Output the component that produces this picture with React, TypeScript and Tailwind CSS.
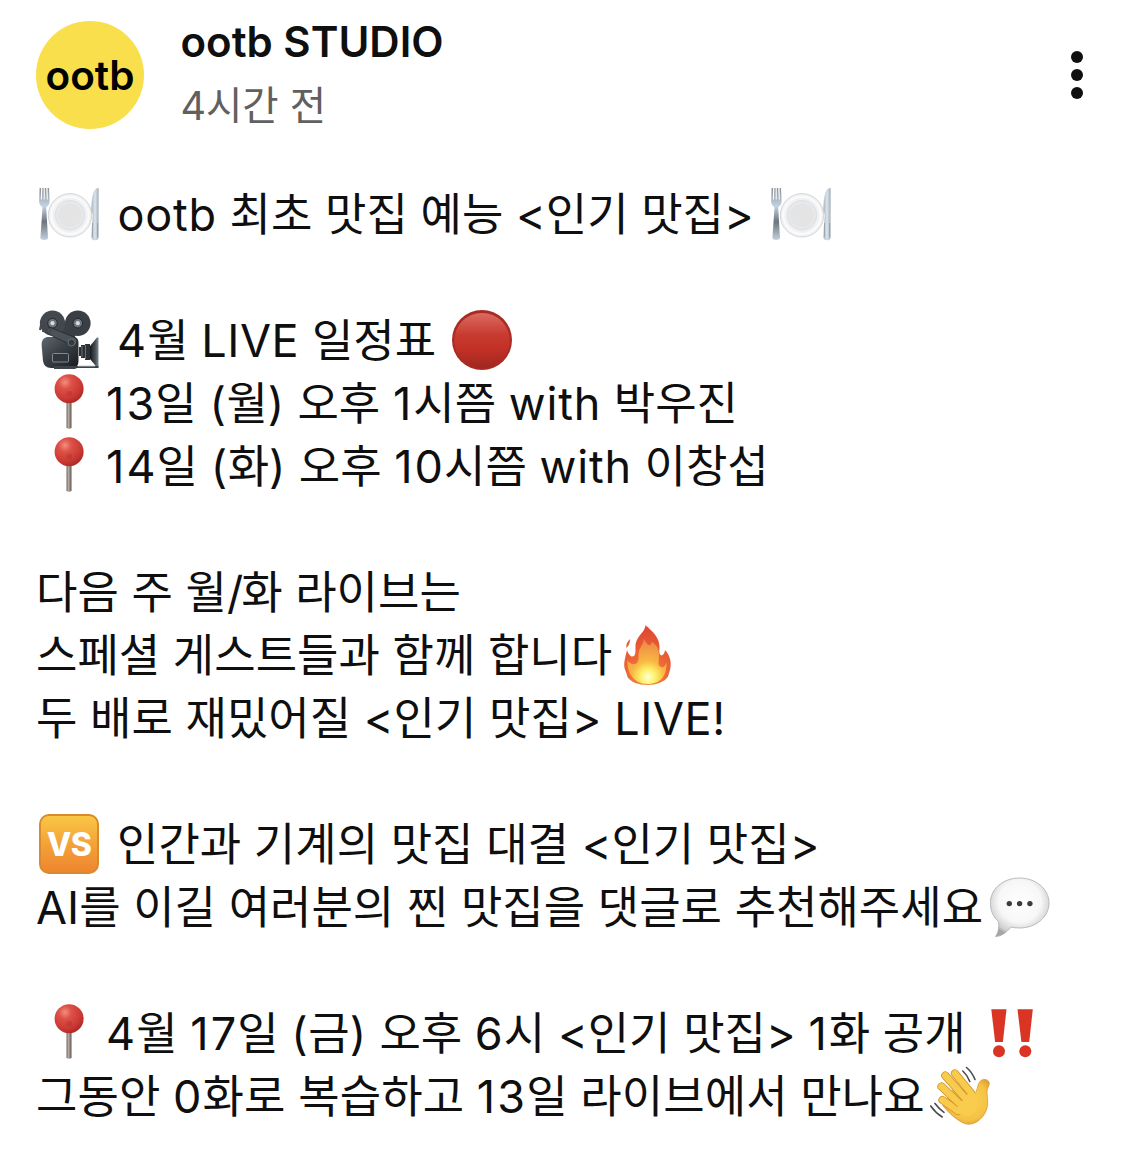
import type { ReactNode } from 'react'

function Plate() {
  return (
    <svg viewBox="0 0 60 60" className="mt-px size-[60px] shrink-0">
      <defs>
        <linearGradient id="steel" x1="0" x2="0" y1="0" y2="1">
          <stop offset="0" stopColor="#8b8f94" />
          <stop offset=".35" stopColor="#c3d3e4" />
          <stop offset=".65" stopColor="#6d747c" />
          <stop offset="1" stopColor="#c3d0de" />
        </linearGradient>
        <linearGradient id="blade" x1="0" x2="1" y1="0" y2="0">
          <stop offset="0" stopColor="#a9b5c1" />
          <stop offset=".5" stopColor="#dce6ee" />
          <stop offset="1" stopColor="#a4afba" />
        </linearGradient>
      </defs>
      <circle cx="31" cy="31.3" r="21.7" fill="#f1f1f2" stroke="#d0d1d3" strokeWidth=".9" />
      <circle cx="31" cy="31.3" r="18.6" fill="none" stroke="#fbfbfb" strokeWidth="2" />
      <circle cx="31" cy="31.3" r="14.5" fill="#e8e9ea" stroke="#dce3ea" strokeWidth="1.6" />
      <circle cx="31" cy="31.3" r="12" fill="#e4e4e4" />
      <path d="M.6 4 .1 17c0 4 2.300 5 3.400 6.500L1.400 54c0 2.600 7.600 2.600 7.600 0L7.200 23.500c1.100-1.500 3.500-2.500 3.400-6.500L10 4H8.600l.2 11.500h-1L7.200 4H5.800l-.1 11.500h-1L4.600 4H3.400l-.5 11.500h-1L2.100 4Z" fill="url(#steel)" />
      <path d="M59.500 4.200c-4-.5-6.500 6.800-7 21.500-.1 2.500 1.500 3.300 1.500 5.300l-1.200 23c0 2.400 6.500 2.400 6.500 0Z" fill="url(#blade)" stroke="#b3bcc5" strokeWidth=".5" />
      <path d="M53.500 39l-.3 14M58.700 39v14" stroke="#8d979f" strokeWidth=".8" fill="none" />
    </svg>
  )
}

function Camera() {
  return (
    <svg viewBox="0 0 60 60" className="mt-px size-[60px] shrink-0">
      <defs>
        <linearGradient id="cam" x1="0" x2="1" y1="0" y2="1">
          <stop offset="0" stopColor="#5f686f" />
          <stop offset=".45" stopColor="#3a4146" />
          <stop offset="1" stopColor="#181b1e" />
        </linearGradient>
        <linearGradient id="hood" x1="0" x2="1" y1="0" y2="0">
          <stop offset="0" stopColor="#15181b" />
          <stop offset=".65" stopColor="#4b5359" />
          <stop offset="1" stopColor="#808a91" />
        </linearGradient>
      </defs>
      <path d="M14 13h25l-3 14H20Z" fill="#3a4045" />
      <circle cx="13.5" cy="13.2" r="12.6" fill="#42484d" />
      <circle cx="38.800" cy="13.200" r="12.800" fill="#393f44" />
      {[13.5, 38.8].map((x) => (
        <g key={x}>
          <circle cx={x} cy="13.2" r="4.8" fill="#6b747b" stroke="#23282b" strokeWidth="1" />
          <circle cx={x} cy="13.2" r="2.1" fill="#d5dce1" />
        </g>
      ))}
      <path d="M8 27h28q3 1 3.500 5v19q0 7-6 7H12Q5 58 4 51L2.600 35Q2.500 28 8 27Z" fill="url(#cam)" />
      <path d="M10 17 35 27q4 2 3 5-1 4-5 3L15 27 7 22Z" fill="#4b5258" stroke="#23272b" strokeWidth=".8" />
      <path d="m2 15-1 5M5 16l-1 6M8.500 17l-1.500 6M12 18l-2 6" stroke="#41474c" strokeWidth="2" />
      <circle cx="32.500" cy="32.500" r="3.500" fill="#343a3f" stroke="#778087" strokeWidth=".8" />
      <rect x="13.500" y="43.500" width="16" height="8.500" rx="1" fill="#30363b" stroke="#8b9298" strokeWidth=".9" />
      <path d="M40 37h2v-2h4v-1h5v16h-5v-2h-4v-2h-2Z" fill="#2b3135" />
      <path d="M43 36v11M46.500 35v14" stroke="#7a848b" strokeWidth=".8" />
      <path d="m51 36 7-8.500h1.500v30H58L51 49Z" fill="url(#hood)" />
      <path d="M15 56h44.500v2H38l-2 1H15Z" fill="#3d4449" />
      <path d="M39 56h17" stroke="#c3cace" strokeWidth=".9" />
    </svg>
  )
}

function Pin() {
  return (
    <svg viewBox="0 0 60 60" className="mt-px size-[60px] shrink-0">
      <defs>
        <radialGradient id="ball" cx=".36" cy=".28" r=".75">
          <stop offset="0" stopColor="#f28d80" />
          <stop offset=".3" stopColor="#de5147" />
          <stop offset=".75" stopColor="#ca3833" />
          <stop offset="1" stopColor="#ad2926" />
        </radialGradient>
        <linearGradient id="needle" x1="0" x2="1" y1="0" y2="0">
          <stop offset="0" stopColor="#70665f" />
          <stop offset=".4" stopColor="#b6aaa2" />
          <stop offset="1" stopColor="#5d544f" />
        </linearGradient>
      </defs>
      <path d="M27.500 27h5v28q-2.500 1.500-5 0Z" fill="url(#needle)" />
      <circle cx="30.100" cy="15.700" r="14.500" fill="url(#ball)" />
      <path d="M27.500 18h5.500v4q-2.700 2-5.500 0Z" fill="#9b2f2c" opacity=".3" />
    </svg>
  )
}

function RedCircle() {
  return (
    <svg viewBox="0 0 60 60" className="mt-px size-[60px] shrink-0">
      <defs>
        <linearGradient id="red" x1="0" x2="0" y1="0" y2="1">
          <stop offset="0" stopColor="#dc6a61" />
          <stop offset=".4" stopColor="#c73a2f" />
          <stop offset=".65" stopColor="#c33026" />
          <stop offset="1" stopColor="#9e2821" />
        </linearGradient>
      </defs>
      <circle cx="30" cy="30" r="30" fill="#a92c24" />
      <circle cx="30" cy="30.700" r="27.800" fill="url(#red)" />
    </svg>
  )
}

function Fire() {
  return (
    <svg viewBox="0 0 60 60" className="mt-px size-[60px] shrink-0">
      <defs>
        <radialGradient id="flame" gradientUnits="userSpaceOnUse" cx="30" cy="50" r="45">
          <stop offset="0" stopColor="#f9a544" />
          <stop offset=".45" stopColor="#ec6636" />
          <stop offset="1" stopColor="#df4a31" />
        </radialGradient>
        <radialGradient id="core" gradientUnits="userSpaceOnUse" cx="31" cy="52" r="36">
          <stop offset="0" stopColor="#fffde0" />
          <stop offset=".2" stopColor="#fdf36c" />
          <stop offset=".45" stopColor="#f9b842" />
          <stop offset="1" stopColor="#ee8747" />
        </radialGradient>
      </defs>
      <path d="M28.500.3C28 7 21 10 18.800 18c-1 4 .7 9-1.300 12.500-3 3-6-1-7.500-5.500C9 30 7.500 34 7.200 39c-.2 3 .8 6 2 8.500l1.300 4.500c3 5 11 8 20 8s17-3 20.500-8.500l2-6.500c2-7 0-15-5-20-.2 3-1.500 5-3.500 5.500-3-1-2-5-2-9 0-9-7-15-14-21.200Z" fill="url(#flame)" />
      <path d="M27 14c-1 7-6 9-5.500 17 .5 6-2 9-6 8-2-.5-4-2-5-4-1 12 6 24 20 24S50 50 49.500 37c-1 4-3 6-5.500 5-4-2-2-6-2-11 0-9-3-11-7-14-2 6-5 3-8-3Z" fill="url(#core)" />
      <path d="M13 14c0 4-1 6-3.500 9-.8-3 .5-6 3.500-9Z" fill="#e65b3b" />
    </svg>
  )
}

function Versus() {
  return (
    <span className="mt-px flex size-[60px] shrink-0 items-center justify-center rounded-[10px] border-2 border-[#d98a2c] bg-linear-to-b from-[#f9c745] via-[#f3a238] to-[#ee8530] text-[32px] font-extrabold tracking-[-0.5px] text-white">
      VS
    </span>
  )
}

function Bubble() {
  return (
    <svg viewBox="0 0 60 60" className="mt-px size-[60px] shrink-0">
      <defs>
        <radialGradient id="bubble" cx=".5" cy=".4" r=".6">
          <stop offset="0" stopColor="#fff" />
          <stop offset=".6" stopColor="#f7f7f7" />
          <stop offset=".9" stopColor="#d0d0d0" />
          <stop offset="1" stopColor="#a5a5a5" />
        </radialGradient>
      </defs>
      <path d="M29.500 1C46 1 59 12 59 26S46 51 29.500 51q-4.500 0-8.500-1C16 56 11 59.500 5.500 59.500 8 56 9.500 51 8.500 44.500 3 40 .3 33 .3 26 .3 12 13 1 29.500 1Z" fill="url(#bubble)" stroke="#adadad" strokeWidth=".8" />
      <circle cx="19.300" cy="26.600" r="2.700" fill="#3c3c3c" />
      <circle cx="29.600" cy="26.600" r="2.700" fill="#3c3c3c" />
      <circle cx="39.900" cy="26.600" r="2.700" fill="#3c3c3c" />
    </svg>
  )
}

function DoubleBang() {
  return (
    <svg viewBox="0 0 60 60" className="mt-px size-[60px] shrink-0" fill="#da3524">
      <path d="M9.300 6.300h15.200L20.900 39h-7.800ZM35.500 6.300h15.300L47.200 39h-7.800Z" />
      <circle cx="17" cy="48.300" r="6" />
      <circle cx="43.300" cy="48.300" r="6" />
    </svg>
  )
}

function Wave() {
  return (
    <svg viewBox="0 0 60 60" className="mt-px size-[60px] shrink-0" fill="none" strokeLinecap="round">
      <defs>
        <radialGradient id="palm" gradientUnits="userSpaceOnUse" cx="38" cy="34" r="28">
          <stop offset="0" stopColor="#fbd255" />
          <stop offset=".7" stopColor="#f5c344" />
          <stop offset="1" stopColor="#dc9a30" />
        </radialGradient>
      </defs>
      <path d="M24 22 45 26.500c3-2 2-9 6-12 3-2.500 8.500-.5 8.300 3-.2 3-2.500 5-2.300 9.500 1 9 1.500 14-2.500 21-5 8-13 12-20 9.500C26 54 19 47 13 40Z" fill="url(#palm)" stroke="#d2932b" strokeWidth=".7" />
      {['M12.500 34 28 45', 'M11.500 20.500 31 39', 'M15.300 9.500 36 33', 'M25 7.500 41 27'].map((d) => (
        <g key={d}>
          <path d={d} stroke="#cf9029" strokeWidth="8.200" />
          <path d={d} stroke="#f8cb4c" strokeWidth="6.600" />
        </g>
      ))}
      <path d="M26 43 40 25q10 1 7 16-5 12-16 8Z" fill="#f9cc4e" />
      <path d="M36.500 1.500q5.500 4.500 8.500 12M32.800 5q4.500 4 7 10.500M5 37.500q4 5.500 9 8.800M.7 40q5 7 11.500 11" stroke="#4b4b4d" strokeWidth="1.600" />
    </svg>
  )
}

function Line({ children, className = '' }: { children?: ReactNode; className?: string }) {
  return <div className={`flex h-[63px] items-start whitespace-pre leading-[63px] ${className}`}>{children}</div>
}

function tracking(part: string) {
  if (part === '1') return 'tracking-[2.1px]'
  if (part === '/') return 'tracking-[-2px]'
  if (/^[0-9]/.test(part)) return 'tracking-[1.1px]'
  if (/^[a-z]/.test(part)) return 'tracking-[0.8px]'
  if (/^([()]|LIVE)/.test(part)) return 'tracking-[0.6px]'
  return ''
}

// Latin letters and digits sit a little looser than the Hangul around them
function Text({ children, className = '' }: { children: string; className?: string }) {
  return (
    <span className={className}>
      {children.split(/(1|[02-9]+|[a-z]+|LIVE|[()/])/).map((part, i) => (
        <span key={i} className={tracking(part)}>{part}</span>
      ))}
    </span>
  )
}

export default function App() {
  return (
    <div className="h-[1164px] w-[1125px] overflow-hidden bg-white text-[#0f0f0f]" style={{ fontFamily: 'Inter, "Noto Sans CJK KR", sans-serif' }}>
      <header className="flex h-[183px] items-start pl-9 pr-[42px]">
        <div className="mt-[21px] flex size-[108px] shrink-0 items-center justify-center rounded-full bg-[#f8df4b] pt-[3px] text-[40.5px] font-semibold text-black">
          ootb
        </div>
        <div className="ml-[36.5px] mt-4 flex-1">
          <h1 className="h-[52px] text-[42px] font-semibold leading-[52px]">ootb STUDIO</h1>
          <p className="mt-3 h-[52px] text-[39.5px] leading-[52px] text-[#606060]">4시간 전</p>
        </div>
        <button aria-label="더보기" className="mt-[51px] flex flex-col gap-[6px]">
          <span className="size-3 rounded-full bg-[#0f0f0f]" />
          <span className="size-3 rounded-full bg-[#0f0f0f]" />
          <span className="size-3 rounded-full bg-[#0f0f0f]" />
        </button>
      </header>

      <main className="text-[45px]">
        <Line className="pl-[39px]">
          <Plate />
          <Text className="ml-[18.5px]">{'ootb 최초 맛집 예능 <인기 맛집>'}</Text>
          <span className="ml-[17px]"><Plate /></span>
        </Line>
        <Line />
        <Line className="pl-[39px]">
          <Camera />
          <Text className="ml-[18px]">4월 LIVE 일정표</Text>
          <span className="ml-[16px]"><RedCircle /></span>
        </Line>
        <Line className="pl-[39px]">
          <Pin />
          <Text className="ml-[7px]">13일 (월) 오후 1시쯤 with 박우진</Text>
        </Line>
        <Line className="pl-[39px]">
          <Pin />
          <Text className="ml-[7px]">14일 (화) 오후 10시쯤 with 이창섭</Text>
        </Line>
        <Line />
        <Line className="pl-9">
          <Text>다음 주 월/화 라이브는</Text>
        </Line>
        <Line className="pl-9">
          <Text className="mr-[5px]">스페셜 게스트들과 함께 합니다</Text>
          <Fire />
        </Line>
        <Line className="pl-9">
          <Text>{'두 배로 재밌어질 <인기 맛집> LIVE!'}</Text>
        </Line>
        <Line />
        <Line className="pl-[39px]">
          <Versus />
          <Text className="ml-[18px]">{'인간과 기계의 맛집 대결 <인기 맛집>'}</Text>
        </Line>
        <Line className="pl-9">
          <Text className="mr-[7px]">AI를 이길 여러분의 찐 맛집을 댓글로 추천해주세요</Text>
          <Bubble />
        </Line>
        <Line />
        <Line className="pl-[39px]">
          <Pin />
          <Text className="ml-[7px]">{'4월 17일 (금) 오후 6시 <인기 맛집> 1화 공개'}</Text>
          <span className="ml-[16px]"><DoubleBang /></span>
        </Line>
        <Line className="pl-9">
          <Text className="mr-[5px] tracking-[0.06px]">그동안 0화로 복습하고 13일 라이브에서 만나요</Text>
          <Wave />
        </Line>
      </main>
    </div>
  )
}
